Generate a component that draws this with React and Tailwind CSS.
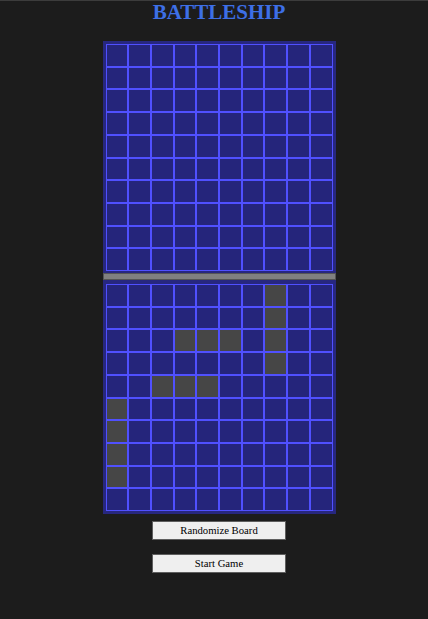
import React from "react";

const ships = new Set([
  "0-7", "1-7", "2-7", "3-7",
  "2-3", "2-4", "2-5",
  "4-2", "4-3", "4-4",
  "5-0", "6-0", "7-0", "8-0",
]);

function Board({ showShips }) {
  const cells = [];
  for (let r = 0; r < 10; r++) {
    for (let c = 0; c < 10; c++) {
      const ship = showShips && ships.has(`${r}-${c}`);
      cells.push(
        <div
          key={`${r}-${c}`}
          className={
            ship
              ? "border border-[#5050ff] bg-[#464646]"
              : "border border-[#5050ff] bg-[#25257b]"
          }
        />
      );
    }
  }
  return (
    <div className="grid grid-cols-10 grid-rows-10 w-[227px] h-[227px]">
      {cells}
    </div>
  );
}

export default function App() {
  return (
    <div
      className="min-h-[619px] bg-[#1c1c1c] border-t border-[#3c3c3c] pl-[10px] flex flex-col items-center"
      style={{ fontFamily: '"Liberation Serif", "Times New Roman", serif' }}
    >
      <h1 className="text-[21px] font-bold text-[#3d6fe6] leading-[22px] m-0">
        BATTLESHIP
      </h1>
      <div className="mt-[18px] w-[233px] bg-[#27277f] p-[3px] flex flex-col">
        <Board showShips={false} />
        <div className="-mx-[3px] my-[2px] h-[7px] bg-[#808080] border border-[#555555]" />
        <div className="mt-[2px]">
          <Board showShips={true} />
        </div>
      </div>
      <button className="mt-[7px] w-[134px] h-[19px] bg-[#efefef] border border-[#5e5e5e] text-black text-[10.7px] leading-none flex items-center justify-center">
        Randomize Board
      </button>
      <button className="mt-[14px] w-[134px] h-[19px] bg-[#efefef] border border-[#5e5e5e] text-black text-[10.7px] leading-none flex items-center justify-center">
        Start Game
      </button>
    </div>
  );
}
